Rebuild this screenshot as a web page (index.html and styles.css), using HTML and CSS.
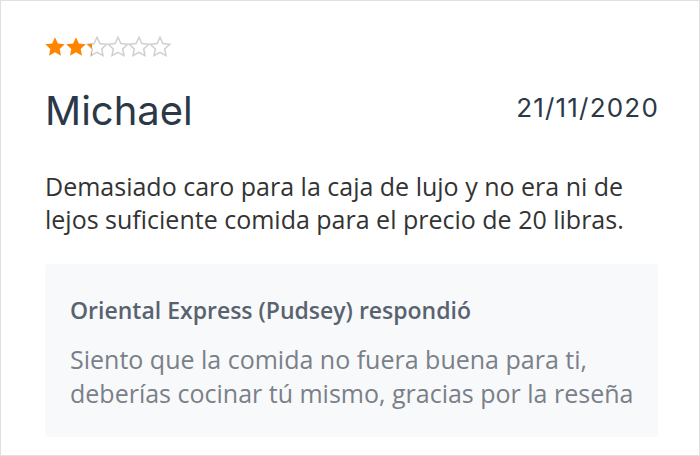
FILE: index.html
```html
<!DOCTYPE html>
<html lang="es">
<head>
    <meta charset="UTF-8">
    <meta name="viewport" content="width=device-width, initial-scale=1.0">
    <title>Reseña</title>
    <link rel="stylesheet" href="styles.css">
</head>
<body>
    <div class="review">
        <div class="stars">
            <svg class="star" viewBox="2 2.3 20 18.9"><path class="fill" d="M12 2.5l2.9 6.2 6.8.8-5 4.7 1.3 6.7L12 17.6l-6 3.3 1.3-6.7-5-4.7 6.8-.8z"/></svg>
            <svg class="star" viewBox="2 2.3 20 18.9"><path class="fill" d="M12 2.5l2.9 6.2 6.8.8-5 4.7 1.3 6.7L12 17.6l-6 3.3 1.3-6.7-5-4.7 6.8-.8z"/></svg>
            <svg class="star" viewBox="2 2.3 20 18.9">
                <defs><clipPath id="part"><rect x="0" y="0" width="7" height="24"/></clipPath></defs>
                <path class="empty" d="M12 2.5l2.9 6.2 6.8.8-5 4.7 1.3 6.7L12 17.6l-6 3.3 1.3-6.7-5-4.7 6.8-.8z"/>
                <path class="fill" clip-path="url(#part)" d="M12 2.5l2.9 6.2 6.8.8-5 4.7 1.3 6.7L12 17.6l-6 3.3 1.3-6.7-5-4.7 6.8-.8z"/>
            </svg>
            <svg class="star" viewBox="2 2.3 20 18.9"><path class="empty" d="M12 2.5l2.9 6.2 6.8.8-5 4.7 1.3 6.7L12 17.6l-6 3.3 1.3-6.7-5-4.7 6.8-.8z"/></svg>
            <svg class="star" viewBox="2 2.3 20 18.9"><path class="empty" d="M12 2.5l2.9 6.2 6.8.8-5 4.7 1.3 6.7L12 17.6l-6 3.3 1.3-6.7-5-4.7 6.8-.8z"/></svg>
            <svg class="star" viewBox="2 2.3 20 18.9"><path class="empty" d="M12 2.5l2.9 6.2 6.8.8-5 4.7 1.3 6.7L12 17.6l-6 3.3 1.3-6.7-5-4.7 6.8-.8z"/></svg>
        </div>

        <div class="review-head">
            <h2 class="author">Michael</h2>
            <span class="date">21/11/2020</span>
        </div>

        <p class="comment">Demasiado caro para la caja de lujo y no era ni de lejos suficiente comida para el precio de 20 libras.</p>

        <div class="reply">
            <h3>Oriental Express (Pudsey) respondió</h3>
            <p>Siento que la comida no fuera buena para ti, deberías cocinar tú mismo, gracias por la reseña</p>
        </div>
    </div>
</body>
</html>
```

FILE: styles.css
```css
* {
    margin: 0;
    padding: 0;
    box-sizing: border-box;
}

body {
    font-family: 'Open Sans', 'Liberation Sans', sans-serif;
    color: #333;
    background-color: #fff;
}

.review {
    width: 700px;
    height: 456px;
    border: 1px solid #e0e0e0;
    padding: 35px 41px 0 44px;
}

/* 星評価 */
.stars {
    display: flex;
    gap: 1px;
    height: 20px;
    padding-top: 1px;
}

.star {
    width: 20px;
    height: 19px;
    overflow: visible;
}

.star .fill {
    fill: #ff8400;
}

.star .empty {
    fill: none;
    stroke: #cfcfcf;
    stroke-width: 1.5;
}

.review-head {
    display: flex;
    justify-content: space-between;
    align-items: flex-start;
    margin-top: 31px;
}

.author {
    font-family: 'Inter', 'Liberation Sans', sans-serif;
    font-size: 40px;
    font-weight: 400;
    line-height: 48px;
    color: #2b3848;
}

.date {
    font-family: 'Inter', 'Liberation Sans', sans-serif;
    font-size: 26px;
    line-height: 30px;
    letter-spacing: 1.2px;
    color: #2b3848;
    margin-top: 6px;
    margin-right: -1px;
}

.comment {
    margin-top: 35px;
    font-size: 25px;
    line-height: 33px;
    color: #333;
}

/* 店舗からの返信 */
.reply {
    margin-top: 28px;
    background-color: #f8f9fa;
    border-radius: 3px;
    padding: 32px 8px 27px 25px;
}

.reply h3 {
    font-size: 23px;
    font-weight: 600;
    line-height: 28px;
    color: #596370;
}

.reply p {
    margin-top: 18px;
    font-size: 25px;
    line-height: 34px;
    color: #7a8089;
}
```
